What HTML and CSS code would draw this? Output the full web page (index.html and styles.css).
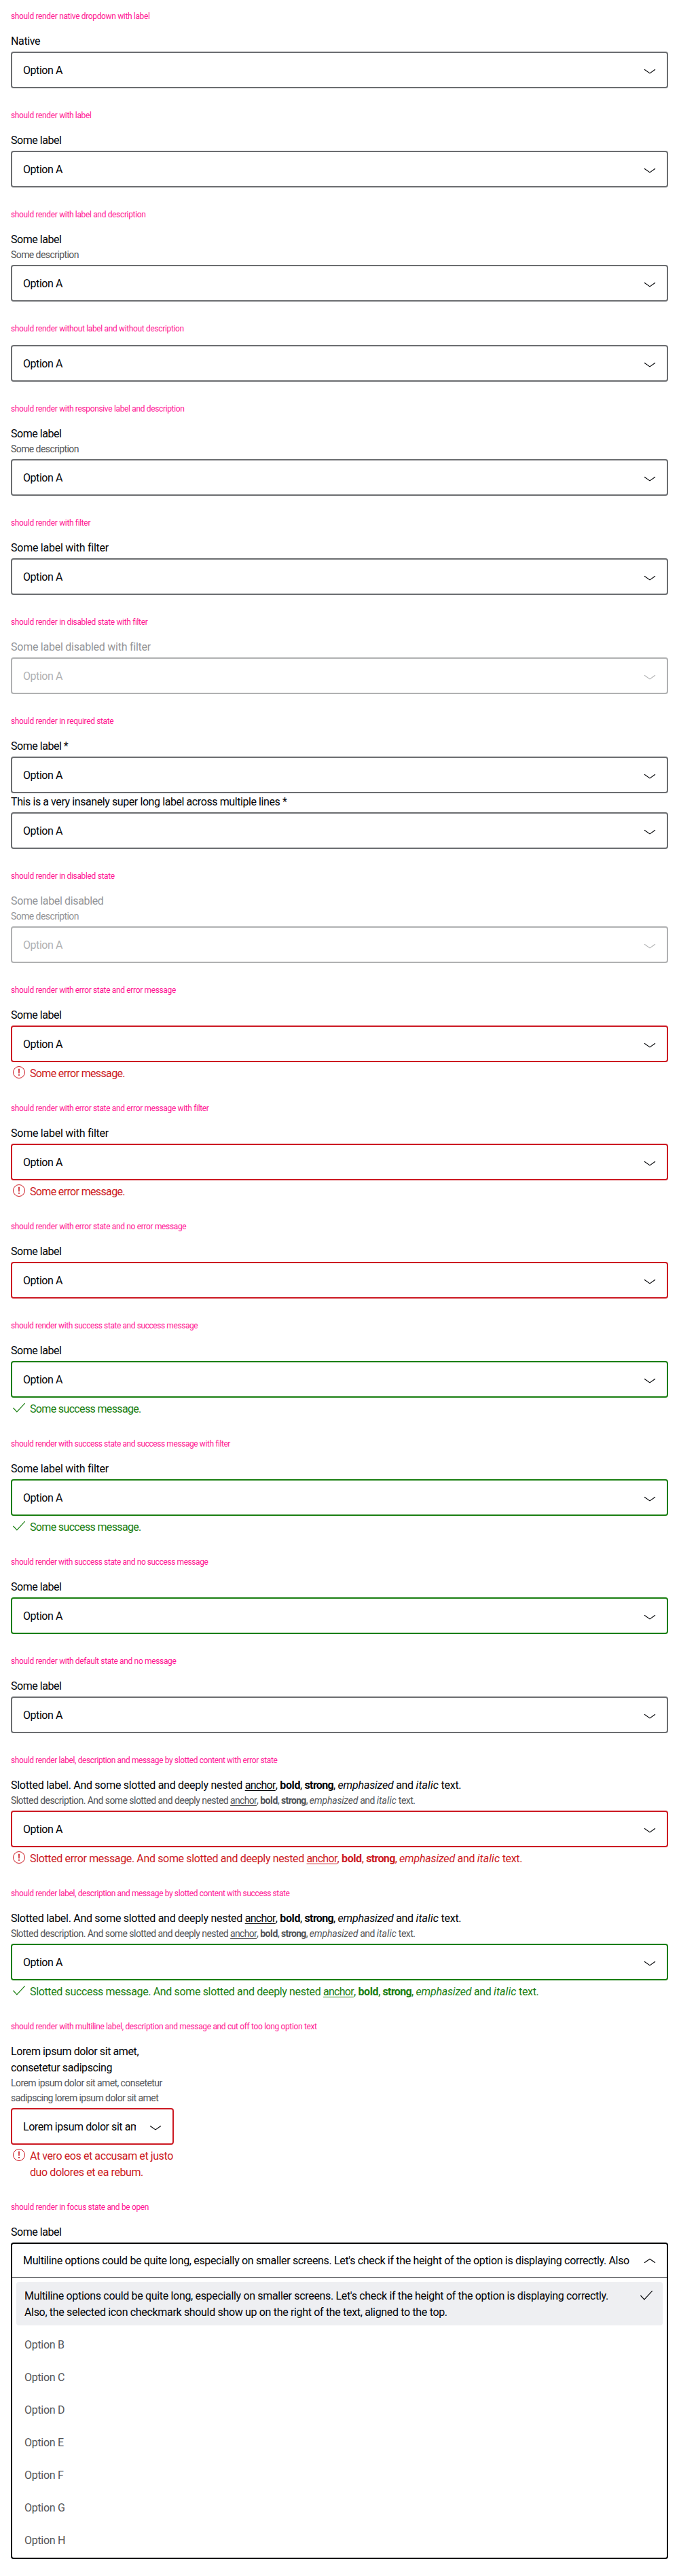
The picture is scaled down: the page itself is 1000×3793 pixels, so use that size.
FILE: index.html
```
<!DOCTYPE html>
<html lang="en">
<head>
<meta charset="utf-8">
<title>Select wrapper states</title>
<link rel="stylesheet" href="styles.css">
</head>
<body>
<svg class="sprite" aria-hidden="true">
  <symbol id="down" viewBox="0 0 24 24"><path d="M4 11.3L12 16.9L20 11.3" fill="none" stroke="currentColor" stroke-width="1.15"/></symbol>
  <symbol id="up" viewBox="0 0 24 24"><path d="M4 14.8L12 9.2L20 14.8" fill="none" stroke="currentColor" stroke-width="1.15"/></symbol>
  <symbol id="check" viewBox="0 0 24 24"><path d="M3.4 11L8.9 16.9L20.7 4.2" fill="none" stroke="currentColor" stroke-width="1.15"/></symbol>
  <symbol id="alert" viewBox="0 0 24 24"><circle cx="12" cy="11" r="8.5" fill="none" stroke="currentColor"/><path d="M11.1 5.8h1.8l-.2 6.6h-1.4zM11.1 14h1.8v1.8h-1.8z" fill="currentColor"/></symbol>
</svg>

<section class="case">
  <h2 class="title">should render native dropdown with label</h2>
  <div class="label">Native</div>
  <div class="select"><span class="value">Option A</span><svg class="icon"><use href="#down"/></svg></div>
</section>
<section class="case">
  <h2 class="title">should render with label</h2>
  <div class="label short">Some label</div>
  <div class="select"><span class="value">Option A</span><svg class="icon"><use href="#down"/></svg></div>
</section>
<section class="case">
  <h2 class="title">should render with label and description</h2>
  <div class="label short">Some label</div>
  <div class="description">Some description</div>
  <div class="select"><span class="value">Option A</span><svg class="icon"><use href="#down"/></svg></div>
</section>
<section class="case">
  <h2 class="title">should render without label and without description</h2>
  <div class="select bare"><span class="value">Option A</span><svg class="icon"><use href="#down"/></svg></div>
</section>
<section class="case">
  <h2 class="title">should render with responsive label and description</h2>
  <div class="label short">Some label</div>
  <div class="description">Some description</div>
  <div class="select"><span class="value">Option A</span><svg class="icon"><use href="#down"/></svg></div>
</section>
<section class="case">
  <h2 class="title">should render with filter</h2>
  <div class="label filter">Some label with filter</div>
  <div class="select"><span class="value">Option A</span><svg class="icon"><use href="#down"/></svg></div>
</section>
<section class="case disabled">
  <h2 class="title">should render in disabled state with filter</h2>
  <div class="label filter">Some label disabled with filter</div>
  <div class="select"><span class="value">Option A</span><svg class="icon"><use href="#down"/></svg></div>
</section>
<section class="case">
  <h2 class="title">should render in required state</h2>
  <div class="label short">Some label *</div>
  <div class="select"><span class="value">Option A</span><svg class="icon"><use href="#down"/></svg></div>
  <div class="label long">This is a very insanely super long label across multiple lines *</div>
  <div class="select"><span class="value">Option A</span><svg class="icon"><use href="#down"/></svg></div>
</section>
<section class="case disabled">
  <h2 class="title">should render in disabled state</h2>
  <div class="label">Some label disabled</div>
  <div class="description">Some description</div>
  <div class="select"><span class="value">Option A</span><svg class="icon"><use href="#down"/></svg></div>
</section>
<section class="case error">
  <h2 class="title">should render with error state and error message</h2>
  <div class="label short">Some label</div>
  <div class="select"><span class="value">Option A</span><svg class="icon"><use href="#down"/></svg></div>
  <div class="message"><svg class="icon"><use href="#alert"/></svg><span class="text">Some error message.</span></div>
</section>
<section class="case error">
  <h2 class="title">should render with error state and error message with filter</h2>
  <div class="label filter">Some label with filter</div>
  <div class="select"><span class="value">Option A</span><svg class="icon"><use href="#down"/></svg></div>
  <div class="message"><svg class="icon"><use href="#alert"/></svg><span class="text">Some error message.</span></div>
</section>
<section class="case error">
  <h2 class="title">should render with error state and no error message</h2>
  <div class="label short">Some label</div>
  <div class="select"><span class="value">Option A</span><svg class="icon"><use href="#down"/></svg></div>
</section>
<section class="case success">
  <h2 class="title wide">should render with success state and success message</h2>
  <div class="label short">Some label</div>
  <div class="select"><span class="value">Option A</span><svg class="icon"><use href="#down"/></svg></div>
  <div class="message"><svg class="icon"><use href="#check"/></svg><span class="text">Some success message.</span></div>
</section>
<section class="case success">
  <h2 class="title wide">should render with success state and success message with filter</h2>
  <div class="label filter">Some label with filter</div>
  <div class="select"><span class="value">Option A</span><svg class="icon"><use href="#down"/></svg></div>
  <div class="message"><svg class="icon"><use href="#check"/></svg><span class="text">Some success message.</span></div>
</section>
<section class="case success">
  <h2 class="title wide">should render with success state and no success message</h2>
  <div class="label short">Some label</div>
  <div class="select"><span class="value">Option A</span><svg class="icon"><use href="#down"/></svg></div>
</section>
<section class="case">
  <h2 class="title">should render with default state and no message</h2>
  <div class="label short">Some label</div>
  <div class="select"><span class="value">Option A</span><svg class="icon"><use href="#down"/></svg></div>
</section>
<section class="case error slotted">
  <h2 class="title">should render label, description and message by slotted content with error state</h2>
  <div class="label">Slotted label. And some slotted and deeply nested <a href="#">anchor</a>, <b>bold</b>, <strong>strong</strong>, <em>emphasized</em> and <i>italic</i> text.</div>
  <div class="description">Slotted description. And some slotted and deeply nested <a href="#">anchor</a>, <b>bold</b>, <strong>strong</strong>, <em>emphasized</em> and <i>italic</i> text.</div>
  <div class="select"><span class="value">Option A</span><svg class="icon"><use href="#down"/></svg></div>
  <div class="message"><svg class="icon"><use href="#alert"/></svg><span class="text">Slotted error message. And some slotted and deeply nested <a href="#">anchor</a>, <b>bold</b>, <strong>strong</strong>, <em>emphasized</em> and <i>italic</i> text.</span></div>
</section>
<section class="case success slotted">
  <h2 class="title">should render label, description and message by slotted content with success state</h2>
  <div class="label">Slotted label. And some slotted and deeply nested <a href="#">anchor</a>, <b>bold</b>, <strong>strong</strong>, <em>emphasized</em> and <i>italic</i> text.</div>
  <div class="description">Slotted description. And some slotted and deeply nested <a href="#">anchor</a>, <b>bold</b>, <strong>strong</strong>, <em>emphasized</em> and <i>italic</i> text.</div>
  <div class="select"><span class="value">Option A</span><svg class="icon"><use href="#down"/></svg></div>
  <div class="message"><svg class="icon"><use href="#check"/></svg><span class="text">Slotted success message. And some slotted and deeply nested <a href="#">anchor</a>, <b>bold</b>, <strong>strong</strong>, <em>emphasized</em> and <i>italic</i> text.</span></div>
</section>
<section class="case error multiline">
  <h2 class="title">should render with multiline label, description and message and cut off too long option text</h2>
  <div class="narrow">
    <div class="label">Lorem ipsum dolor sit amet,<br>consetetur sadipscing</div>
    <div class="description">Lorem ipsum dolor sit amet, consetetur<br>sadipscing lorem ipsum dolor sit amet</div>
    <div class="select"><span class="value">Lorem ipsum dolor sit amet</span><svg class="icon"><use href="#down"/></svg></div>
    <div class="message"><svg class="icon"><use href="#alert"/></svg><span class="text">At vero eos et accusam et justo<br>duo dolores et ea rebum.</span></div>
  </div>
</section>
<section class="case open">
  <h2 class="title">should render in focus state and be open</h2>
  <div class="label short">Some label</div>
  <div class="dropdown">
    <div class="select"><span class="value">Multiline options could be quite long, especially on smaller screens. Let's check if the height of the option is displaying correctly. Also</span><svg class="icon"><use href="#up"/></svg></div>
    <ul class="list">
      <li class="option selected"><span>Multiline options could be quite long, especially on smaller screens. Let's check if the height of the option is displaying correctly.<br>Also, the selected icon checkmark should show up on the right of the text, aligned to the top.</span><svg class="icon"><use href="#check"/></svg></li>
      <li class="option">Option B</li>
      <li class="option">Option C</li>
      <li class="option">Option D</li>
      <li class="option">Option E</li>
      <li class="option">Option F</li>
      <li class="option">Option G</li>
      <li class="option">Option H</li>
    </ul>
  </div>
</section>
</body>
</html>
```
FILE: styles.css
```
* { box-sizing: border-box; }

body {
  margin: 0;
  background: #fff;
  color: #010205;
  font: 16px/24px Roboto, "Liberation Sans", sans-serif;
  letter-spacing: -.36px;
}

.sprite { display: none; }
.icon { display: block; flex: none; width: 24px; height: 24px; }
a { color: inherit; letter-spacing: -.7px; text-underline-offset: 2px; }

.case { padding: 16px; }

.title {
  margin: 0 0 16px;
  color: #ff1493;
  font-size: 12px;
  font-weight: 400;
  line-height: 16px;
  letter-spacing: -.35px;
}
.title.wide { letter-spacing: -.425px; }

.label { padding-top: 1px; margin-bottom: -1px; }
.label.short { letter-spacing: -.47px; }
.label.filter { letter-spacing: -.25px; }
.label.long { letter-spacing: -.415px; }

.description {
  color: #535457;
  font-size: 14px;
  line-height: 22px;
  letter-spacing: -.57px;
}

.select {
  display: flex;
  align-items: center;
  height: 54px;
  margin-top: 4px;
  padding: 0 13px 0 16px;
  border: 2px solid #6b6d70;
  border-radius: 4px;
}
.select.bare { margin-top: 0; }

.value {
  flex: 1;
  min-width: 0;
  margin-right: 17px;
  padding-top: 1px;
  overflow: hidden;
  white-space: nowrap;
  letter-spacing: -.44px;
}

.message {
  display: flex;
  gap: 4px;
  margin-top: 4px;
  letter-spacing: -.65px;
}
.text { padding-top: 1px; margin-bottom: -1px; }

.error .select { border-color: #cc1922; }
.error .message { color: #cc1922; }
.success .select { border-color: #197e10; }
.success .message { color: #197e10; }

.disabled .label, .disabled .description { color: #949598; }
.disabled .select { border-color: #b0b1b2; color: #b0b1b2; }

.slotted .title { letter-spacing: -.39px; }
.slotted .label { letter-spacing: -.29px; }
.slotted .description { letter-spacing: -.555px; }
.slotted .message { letter-spacing: -.355px; }
.slotted b { letter-spacing: -.4px; }
.slotted strong { letter-spacing: -.65px; }
.slotted em { letter-spacing: -.2px; }
.slotted i { letter-spacing: .07px; }

.narrow { width: 240px; }
.multiline .label { letter-spacing: -.4px; }
.multiline .message { letter-spacing: -.41px; white-space: nowrap; }

.dropdown {
  margin-top: 4px;
  border: 2px solid #010205;
  border-radius: 4px;
}
.open .select {
  height: 50px;
  margin: 0;
  border: 0;
  border-bottom: 1px solid #6b6d70;
  border-radius: 0;
}
.open .value { letter-spacing: -.337px; }

.list {
  display: flex;
  flex-direction: column;
  gap: 8px;
  margin: 0;
  padding: 6px;
  list-style: none;
}
.option {
  display: flex;
  justify-content: space-between;
  padding: 9px 12px 7px;
  border-radius: 4px;
  color: #535457;
  letter-spacing: -.3px;
}
.option.selected { background: #eeeff2; color: #010205; letter-spacing: -.33px; }
```
